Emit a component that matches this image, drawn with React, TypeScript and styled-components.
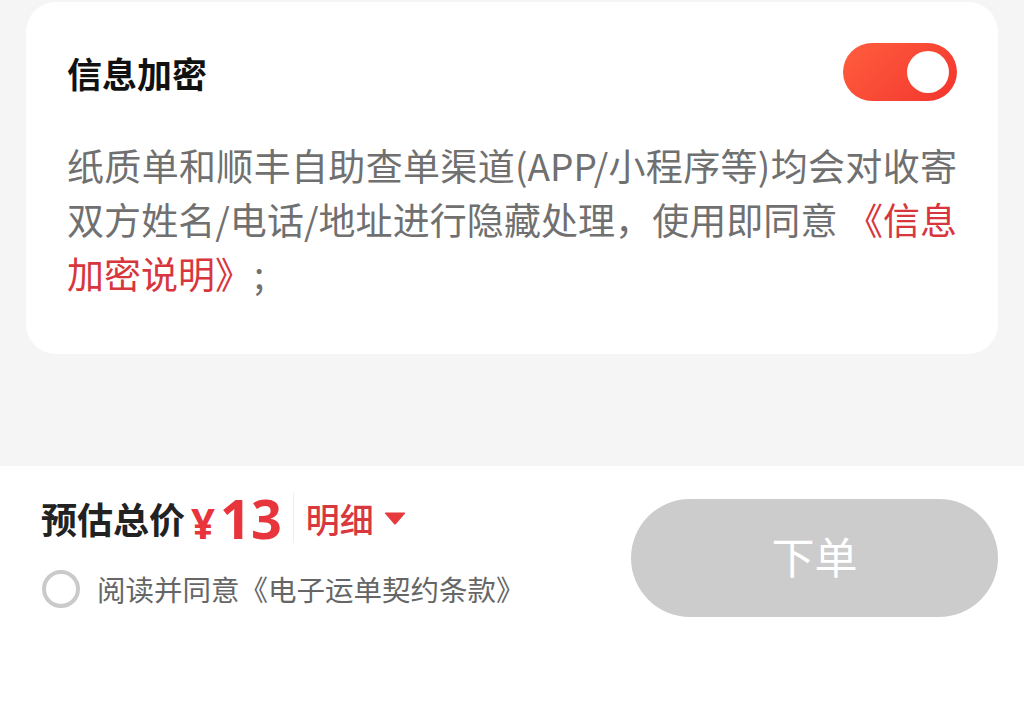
import React from "react";
import styled, { createGlobalStyle } from "styled-components";

const GlobalStyle = createGlobalStyle`
  html, body { margin: 0; padding: 0; }
  body {
    background: #f5f5f5;
    font-family: "Noto Sans CJK SC", "Noto Sans", sans-serif;
  }
`;

const Page = styled.div`
  width: 1024px;
  height: 702px;
  display: flex;
  flex-direction: column;
  background: #f5f5f5;
  overflow: hidden;
`;

const Top = styled.div`
  flex: 1;
  padding: 2px 26px 0;
`;

const Card = styled.section`
  background: #ffffff;
  border-radius: 30px;
  height: 352px;
  box-sizing: border-box;
  padding: 41px 41px 0 41px;
`;

const Header = styled.div`
  display: flex;
  justify-content: space-between;
  align-items: center;
  height: 58px;
`;

const Title = styled.h2`
  margin: 0;
  font-size: 35px;
  font-weight: 700;
  color: #111;
  line-height: 1;
`;

const Switch = styled.div<{ $on: boolean }>`
  width: 114px;
  height: 58px;
  border-radius: 29px;
  box-sizing: border-box;
  padding: 8px;
  display: flex;
  justify-content: ${(p) => (p.$on ? "flex-end" : "flex-start")};
  align-items: center;
  background: ${(p) =>
    p.$on ? "linear-gradient(135deg, #ff5e3e 0%, #f3352e 100%)" : "#ddd"};
`;

const Knob = styled.div`
  width: 42px;
  height: 42px;
  border-radius: 50%;
  background: #fff;
`;

const Body = styled.p`
  margin: 37px 0 0;
  font-size: 37px;
  line-height: 54px;
  color: #707070;
  text-align: justify;
`;

const Link = styled.span`
  color: #d8363d;
`;

const Semi = styled.span`
  margin-left: 2px;
`;

const Bar = styled.div`
  height: 236px;
  flex-shrink: 0;
  background: #ffffff;
  display: flex;
  align-items: flex-start;
  padding: 0 26px 0 41px;
`;

const Left = styled.div`
  display: flex;
  flex-direction: column;
  padding-top: 22px;
`;

const PriceRow = styled.div`
  display: flex;
  align-items: center;
  height: 60px;
`;

const Label = styled.span`
  font-size: 36px;
  font-weight: 700;
  color: #222;
`;

const Price = styled.span`
  color: #e8343b;
  font-weight: 700;
  font-family: "Noto Sans", "Noto Sans CJK SC", sans-serif;
  margin-left: 6px;
  display: flex;
  align-items: baseline;
`;

const Yen = styled.span`
  font-size: 42px;
`;

const Amount = styled.span`
  font-size: 54px;
  margin-left: 5px;
`;

const Divider = styled.div`
  width: 1px;
  height: 50px;
  background: #eeeeee;
  margin: 0 12px 0 11px;
`;

const Detail = styled.span`
  font-size: 34px;
  font-weight: 500;
  color: #d8383e;
  display: flex;
  align-items: center;
  gap: 10px;
`;

const AgreeRow = styled.div`
  display: flex;
  align-items: center;
  margin-top: 20px;
  margin-left: 1px;
`;

const Radio = styled.div`
  width: 38px;
  height: 38px;
  box-sizing: border-box;
  border-radius: 50%;
  border: 4px solid #cacaca;
`;

const AgreeText = styled.span`
  margin-left: 17px;
  font-size: 28.5px;
  color: #666;
`;

const OrderButton = styled.button`
  margin-left: auto;
  margin-top: 33px;
  width: 367px;
  height: 118px;
  border: none;
  border-radius: 59px;
  background: #cccccc;
  color: #ffffff;
  font-family: "Noto Sans CJK SC", sans-serif;
  font-size: 43px;
  padding: 0 0 6px;
`;

export default function App() {
  return (
    <>
      <GlobalStyle />
      <Page>
        <Top>
          <Card>
            <Header>
              <Title>信息加密</Title>
              <Switch $on>
                <Knob />
              </Switch>
            </Header>
            <Body>
              纸质单和顺丰自助查单渠道(APP/小程序等)均会对收寄双方姓名/电话/地址进行隐藏处理，使用即同意 <Link>《信息加密说明》</Link>
              <Semi>;</Semi>
            </Body>
          </Card>
        </Top>
        <Bar>
          <Left>
            <PriceRow>
              <Label>预估总价</Label>
              <Price>
                <Yen>¥</Yen>
                <Amount>13</Amount>
              </Price>
              <Divider />
              <Detail>
                明细
                <svg width="22" height="13" viewBox="0 0 22 13">
                  <path d="M1 1.5 Q0.5 0.5 2 0.5 L20 0.5 Q21.5 0.5 21 1.5 L12 12 Q11 13 10 12 Z" fill="#e83a3e" />
                </svg>
              </Detail>
            </PriceRow>
            <AgreeRow>
              <Radio />
              <AgreeText>阅读并同意《电子运单契约条款》</AgreeText>
            </AgreeRow>
          </Left>
          <OrderButton>下单</OrderButton>
        </Bar>
      </Page>
    </>
  );
}
